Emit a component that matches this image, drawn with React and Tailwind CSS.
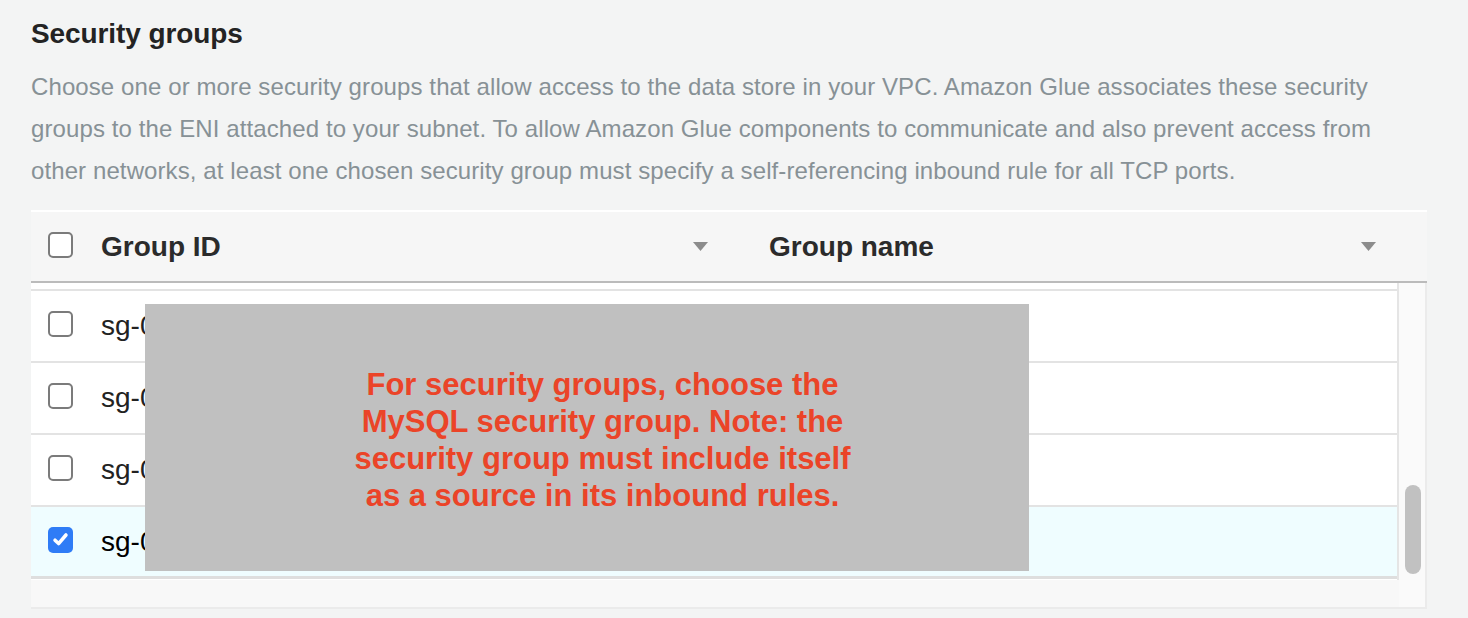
import React from "react";

function Box({ checked }) {
  if (checked) {
    return (
      <div className="w-[25px] h-[26px] mb-1 rounded-[5px] bg-[#2f7cf6] flex items-center justify-center shrink-0">
        <svg width="19" height="19" viewBox="0 0 16 16">
          <path d="M3.4 8.6 L6.4 11.4 L12.6 4.2" fill="none" stroke="#ffffff" strokeWidth="3" strokeLinecap="round" strokeLinejoin="round" />
        </svg>
      </div>
    );
  }
  return <div className="w-[25px] h-[26px] mb-1 rounded-[5px] border-2 border-[#7b7b7b] bg-white shrink-0" />;
}

function Tri() {
  return (
    <svg width="15" height="9" viewBox="0 0 15 9" className="shrink-0">
      <path d="M0 0 H15 L7.5 9 Z" fill="#8c8c8c" />
    </svg>
  );
}

function Row({ selected }) {
  return (
    <div
      className={
        "h-[72px] flex items-center pl-[17px] " +
        (selected ? "bg-[#effdff] border-b-[3px] border-[#dedede] text-black" : "bg-white border-b-2 border-[#e3e3e3] text-[#222]")
      }
    >
      <Box checked={selected} />
      <div className="ml-[28px] text-[28px] leading-[34px]">sg-0</div>
    </div>
  );
}

export default function App() {
  return (
    <div className="relative w-[1468px] h-[618px] overflow-hidden bg-[#f3f4f4] pl-[31px] pr-[41px] pt-[17px] font-['Liberation_Sans',Arial,sans-serif]">
      <h2 className="text-[28px] leading-[34px] font-bold text-[#232323] tracking-[-0.1px]">Security groups</h2>
      <p className="mt-[15px] text-[24px] leading-[42px] text-[#879196] tracking-[0.1px]">
        Choose one or more security groups that allow access to the data store in your VPC. Amazon Glue associates these security
        <br />
        groups to the ENI attached to your subnet. To allow Amazon Glue components to communicate and also prevent access from
        <br />
        other networks, at least one chosen security group must specify a self-referencing inbound rule for all TCP ports.
      </p>

      <div className="mt-[18px] flex flex-col">
        <div className="h-[73px] bg-[#f6f6f6] border-t-2 border-white border-b-2 border-b-[#bbbbbb] flex items-center pl-[17px]">
          <Box />
          <div className="ml-[28px] w-[607px] flex items-center justify-between">
            <span className="text-[28px] leading-[34px] font-bold text-[#2b2b2b]">Group ID</span>
            <Tri />
          </div>
          <div className="ml-[61px] w-[607px] flex items-center justify-between">
            <span className="text-[28px] leading-[34px] font-bold text-[#2b2b2b]">Group name</span>
            <Tri />
          </div>
        </div>

        <div className="flex h-[326px] border-r-2 border-b-2 border-[#ebebeb]">
          <div className="flex flex-col w-[1368px]">
            <div className="h-[297px] overflow-hidden bg-white border-r-2 border-[#e5e5e5] flex flex-col">
              <div className="h-[8px] shrink-0 border-b-2 border-[#e3e3e3] bg-white" />
              <Row />
              <Row />
              <Row />
              <Row selected />
            </div>
            <div className="h-[27px] bg-[#f8f8f8]" />
          </div>
          <div className="w-[26px] bg-[#fafafa] pl-[6px] pt-[202px]">
            <div className="w-[16px] h-[89px] rounded-full bg-[#c1c1c1]" />
          </div>
        </div>
      </div>

      <div className="absolute left-[145px] top-[304px] w-[884px] h-[267px] bg-[#c0c0c0] flex items-center justify-center pl-[31px] pt-1">
        <p className="text-center text-[31px] leading-[37px] font-bold text-[#eb4428]">
          For security groups, choose the
          <br />
          MySQL security group. Note: the
          <br />
          security group must include itself
          <br />
          as a source in its inbound rules.
        </p>
      </div>
    </div>
  );
}
